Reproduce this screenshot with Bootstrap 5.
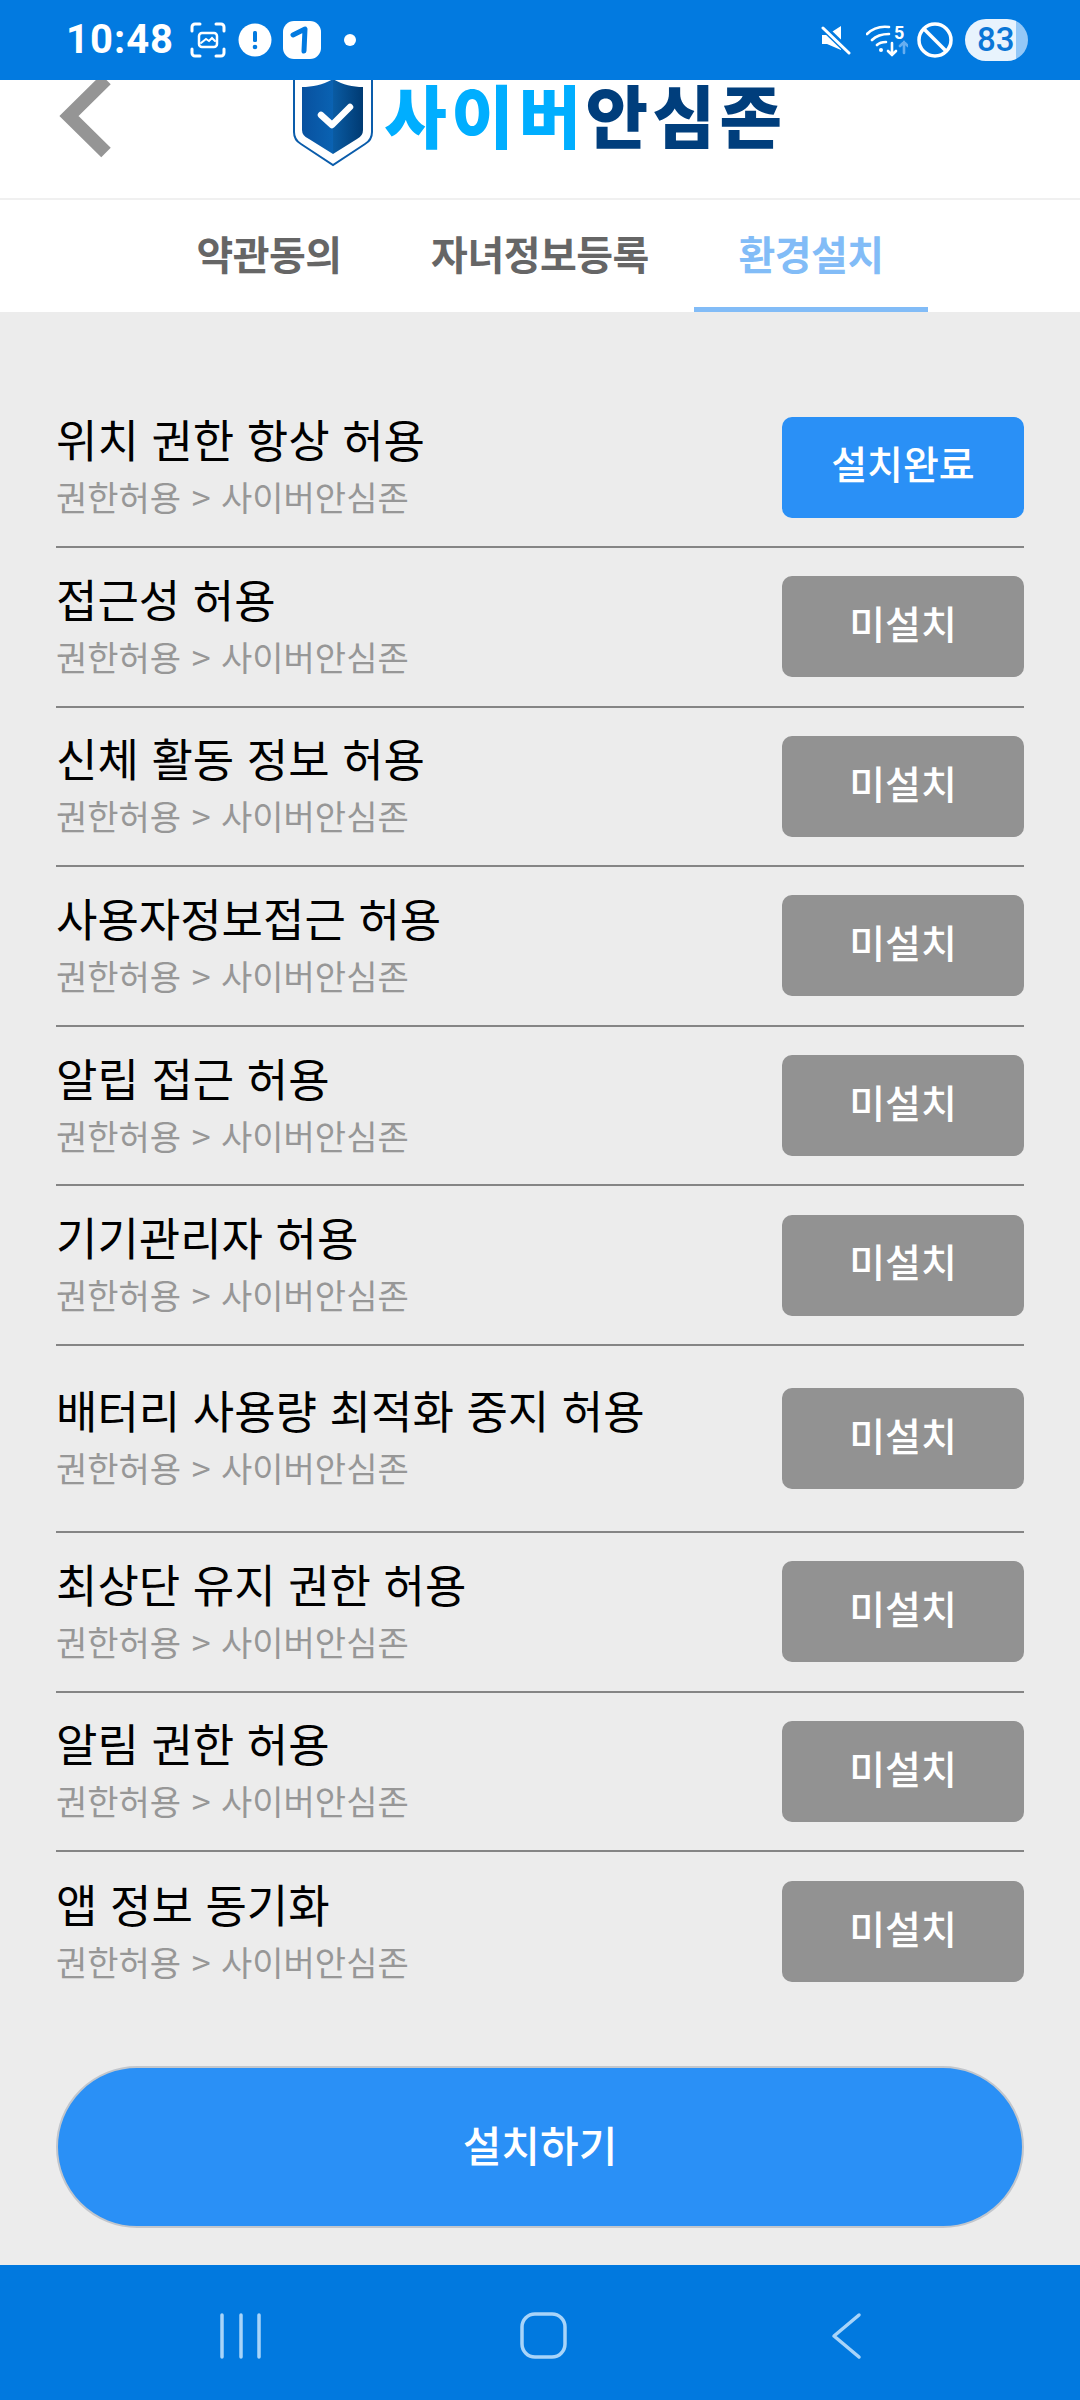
<!DOCTYPE html>
<html lang="ko">
<head>
  <meta charset="utf-8">
  <title>환경설치</title>
  <link href="https://cdn.jsdelivr.net/npm/bootstrap@5.3.2/dist/css/bootstrap.min.css" rel="stylesheet" />
  <style>
    body {
        width: 1080px;
        height: 2400px;
        background-color: #ececec;
        font-family: "Noto Sans CJK KR", "Noto Sans", sans-serif;
    }
    .status-bar {
        height: 80px;
        background-color: #027ae0;
        padding: 0 52px 0 66px;
        color: #fff;
    }
    .clock {
        width: 124px;
        font-family: Roboto, sans-serif;
        font-weight: 700;
        font-size: 40px;
        letter-spacing: 1px;
        line-height: 1;
    }
    .gap-r-12 { margin-right: 12px; }
    .gap-r-11 { margin-right: 11px; }
    .gap-r-23 { margin-right: 23px; }
    .battery-pill {
        width: 63px;
        height: 42px;
        border-radius: 21px;
        background: linear-gradient(90deg, #e8f3fd 81%, #94c8f7 81%);
        color: #0a76d6;
        font-family: Roboto, sans-serif;
        font-weight: 500;
        font-size: 33px;
        line-height: 42px;
        padding-left: 12px;
    }
    .top-head {
        height: 120px;
        background-color: #fff;
        border-bottom: 2px solid #f0f0f0;
        overflow: hidden;
    }
    .back-link {
        left: 56px;
        top: -10px;
    }
    .logo-box {
        margin-top: -12px;
        gap: 11px;
    }
    .logo-text {
        margin-top: 12px;
        font-weight: 900;
        font-size: 68px;
        line-height: 1;
        letter-spacing: 4.5px;
        white-space: nowrap;
    }
    .logo-sky { color: #00aeff; }
    .logo-navy { color: #003e7c; }
    .tab-bar {
        height: 112px;
        background-color: #fff;
        gap: 37px;
    }
    .tab-item {
        width: 234px;
        height: 112px;
        padding-bottom: 2px;
        font-size: 40px;
        font-weight: 700;
        color: #666;
        border-bottom: 5px solid transparent;
        white-space: nowrap;
        letter-spacing: -.5px;
    }
    .tab-item.on {
        color: #82bcf7;
        border-bottom-color: #82bcf7;
    }
    .perm-list {
        padding: 76.4px 56px 0;
    }
    .perm-row {
        height: 159.6px;
        border-bottom: 2px solid #858585;
    }
    .perm-row.tall { height: 187px; }
    .perm-row:last-child { border-bottom: 0; }
    .perm-text { padding-bottom: 5px; }
    .perm-title {
        margin-bottom: 5px;
        font-size: 45px;
        line-height: 60px;
        color: #000;
    }
    .perm-sub {
        font-size: 34px;
        line-height: 46px;
        word-spacing: 1px;
        color: #979797;
    }
    .state-btn {
        width: 242px;
        height: 101px;
        border: 0;
        border-radius: 10px;
        font-size: 39px;
        font-weight: 500;
        color: #fff;
        background-color: #929292;
        padding: 0 0 9px;
    }
    .state-btn.done { background-color: #2a90f6; }
    .install-btn {
        display: block;
        width: 968px;
        height: 162px;
        margin: 54px auto 0;
        padding: 0 0 6px;
        border: 2px solid #c2c6cc;
        border-radius: 81px;
        background-color: #2a90f6;
        color: #fff;
        font-size: 42px;
        font-weight: 500;
    }
    .nav-keys {
        height: 135px;
        background-color: #0179df;
    }
  </style>
</head>
<body class="d-flex flex-column m-0">

<div class="status-bar d-flex align-items-center">
  <span class="clock">10:48</span>
  <svg width="36" height="36" viewBox="0 0 36 36" fill="none" stroke="#fff" stroke-width="3" stroke-linecap="round" class="gap-r-12 flex-shrink-0">
    <path d="M2 9V5a3 3 0 0 1 3-3h5M26 2h5a3 3 0 0 1 3 3v4M34 27v4a3 3 0 0 1-3 3h-5M10 34H5a3 3 0 0 1-3-3v-4"/>
    <rect x="9" y="11" width="18" height="14" rx="3" stroke-width="2.5"/>
    <path d="M11 21l5-4 3 2 3-3 3 3" stroke-width="2"/>
  </svg>
  <svg width="34" height="34" viewBox="0 0 34 34" class="gap-r-11 flex-shrink-0">
    <circle cx="17" cy="17" r="16.5" fill="#fff"/>
    <rect x="15" y="8" width="4" height="11" rx="1.5" fill="#027ae0"/>
    <circle cx="17" cy="24" r="2.3" fill="#027ae0"/>
  </svg>
  <svg width="38" height="38" viewBox="0 0 38 38" class="gap-r-23 flex-shrink-0">
    <rect width="38" height="38" rx="11" fill="#fff"/>
    <path d="M10 14l12-6-1 22" fill="none" stroke="#027ae0" stroke-width="5" stroke-linecap="round" stroke-linejoin="round"/>
  </svg>
  <svg width="12" height="12" viewBox="0 0 12 12" class="flex-shrink-0"><circle cx="6" cy="6" r="6" fill="#fff"/></svg>

  <div class="ms-auto d-flex align-items-center">
    <svg width="30" height="30" viewBox="0 0 30 30" class="flex-shrink-0" style="margin-right:15px">
      <path d="M1 10h5l14-9v24L6 19H1z" fill="#fff"/>
      <path d="M1 1l29 28" stroke="#027ae0" stroke-width="7"/>
      <path d="M2 3l26 25" stroke="#fff" stroke-width="3" stroke-linecap="round"/>
    </svg>
    <svg width="42" height="34" viewBox="0 0 42 34" fill="none" stroke="#fff" stroke-width="2.6" stroke-linecap="round" class="flex-shrink-0" style="margin-right:9px">
      <path d="M1 11C7 5 15 3 23 4M6 17c4-4 10-6 17-6M11 22c2-2 5-3 9-3"/>
      <circle cx="15" cy="27" r="2" fill="#fff" stroke="none"/>
      <path d="M26 20v12m-4-4l4 4 4-4"/>
      <path d="M38 30V19m-4 4l4-4 4 4" stroke="#66aef0"/>
      <text x="28" y="16" font-family="Roboto, sans-serif" font-size="18" font-weight="700" fill="#fff" stroke="none">5</text>
    </svg>
    <svg width="36" height="36" viewBox="0 0 36 36" fill="none" stroke="#fff" stroke-width="3.5" class="flex-shrink-0" style="margin-right:12px">
      <circle cx="18" cy="18" r="16"/>
      <path d="M7 7l22 22"/>
    </svg>
    <div class="battery-pill">83</div>
  </div>
</div>

<header class="top-head position-relative d-flex justify-content-center">
  <a class="back-link position-absolute" href="#">
    <svg width="56" height="92" viewBox="0 0 56 92" fill="none" stroke="#959595" stroke-width="13.5"><path d="M50 9.5L13 46l37 36.5"/></svg>
  </a>
  <div class="logo-box d-flex align-items-start">
    <svg width="80" height="100" viewBox="0 0 80 100" class="flex-shrink-0">
      <defs>
        <linearGradient id="shieldFill" x1="0" x2="1"><stop offset="0" stop-color="#08519f"/><stop offset=".5" stop-color="#0a62b2"/><stop offset=".5" stop-color="#0a5ca4"/><stop offset="1" stop-color="#003a72"/></linearGradient>
      </defs>
      <path d="M1 0V64Q1 72 8 76L40 97 72 76Q79 72 79 64V0z" fill="#fff" stroke="#0a5cab" stroke-width="2"/>
      <path d="M9 19C20 19 32 16 40 11 48 16 59 19 70 19V62Q70 68 64 71L40 86 16 71Q9 68 9 62z" fill="url(#shieldFill)"/>
      <path d="M28 47l11 10 18-18" fill="none" stroke="#fff" stroke-width="6.5" stroke-linecap="round" stroke-linejoin="round"/>
    </svg>
    <div class="logo-text"><span class="logo-sky">사이버</span><span class="logo-navy">안심존</span></div>
  </div>
</header>

<nav class="tab-bar d-flex justify-content-center">
  <div class="tab-item d-flex align-items-center justify-content-center">약관동의</div>
  <div class="tab-item d-flex align-items-center justify-content-center">자녀정보등록</div>
  <div class="tab-item on d-flex align-items-center justify-content-center">환경설치</div>
</nav>

<main class="flex-grow-1">
  <div class="perm-list" id="permList"></div>
  <button class="install-btn" type="button">설치하기</button>
</main>

<div class="nav-keys position-relative flex-shrink-0">
  <svg width="1080" height="135" viewBox="0 0 1080 135" fill="none" stroke="#a8d4f9" stroke-width="3.5" stroke-linecap="round" stroke-linejoin="round" class="d-block">
    <path d="M222 50v42M241 50v42M259 50v42"/>
    <rect x="522" y="49" width="43" height="43" rx="13"/>
    <path d="M859 50l-25 21 25 21" />
  </svg>
</div>

<script>
  const perms = [
    "위치 권한 항상 허용", "접근성 허용", "신체 활동 정보 허용", "사용자정보접근 허용", "알립 접근 허용",
    "기기관리자 허용", "배터리 사용량 최적화 중지 허용", "최상단 유지 권한 허용", "알림 권한 허용", "앱 정보 동기화"
  ];
  const list = document.getElementById("permList");
  perms.forEach(function (title, i) {
      const row = document.createElement("div");
      row.className = "perm-row d-flex align-items-center justify-content-between" + (i === 6 ? " tall" : "");
      row.innerHTML = `
        <div class="perm-text">
          <div class="perm-title">${title}</div>
          <div class="perm-sub">권한허용 &gt; 사이버안심존</div>
        </div>
        <button type="button" class="state-btn${i === 0 ? " done" : ""}">${i === 0 ? "설치완료" : "미설치"}</button>`;
      list.appendChild(row);
  });
</script>
<script src="https://cdn.jsdelivr.net/npm/bootstrap@5.3.2/dist/js/bootstrap.bundle.min.js"></script>
</body>
</html>
